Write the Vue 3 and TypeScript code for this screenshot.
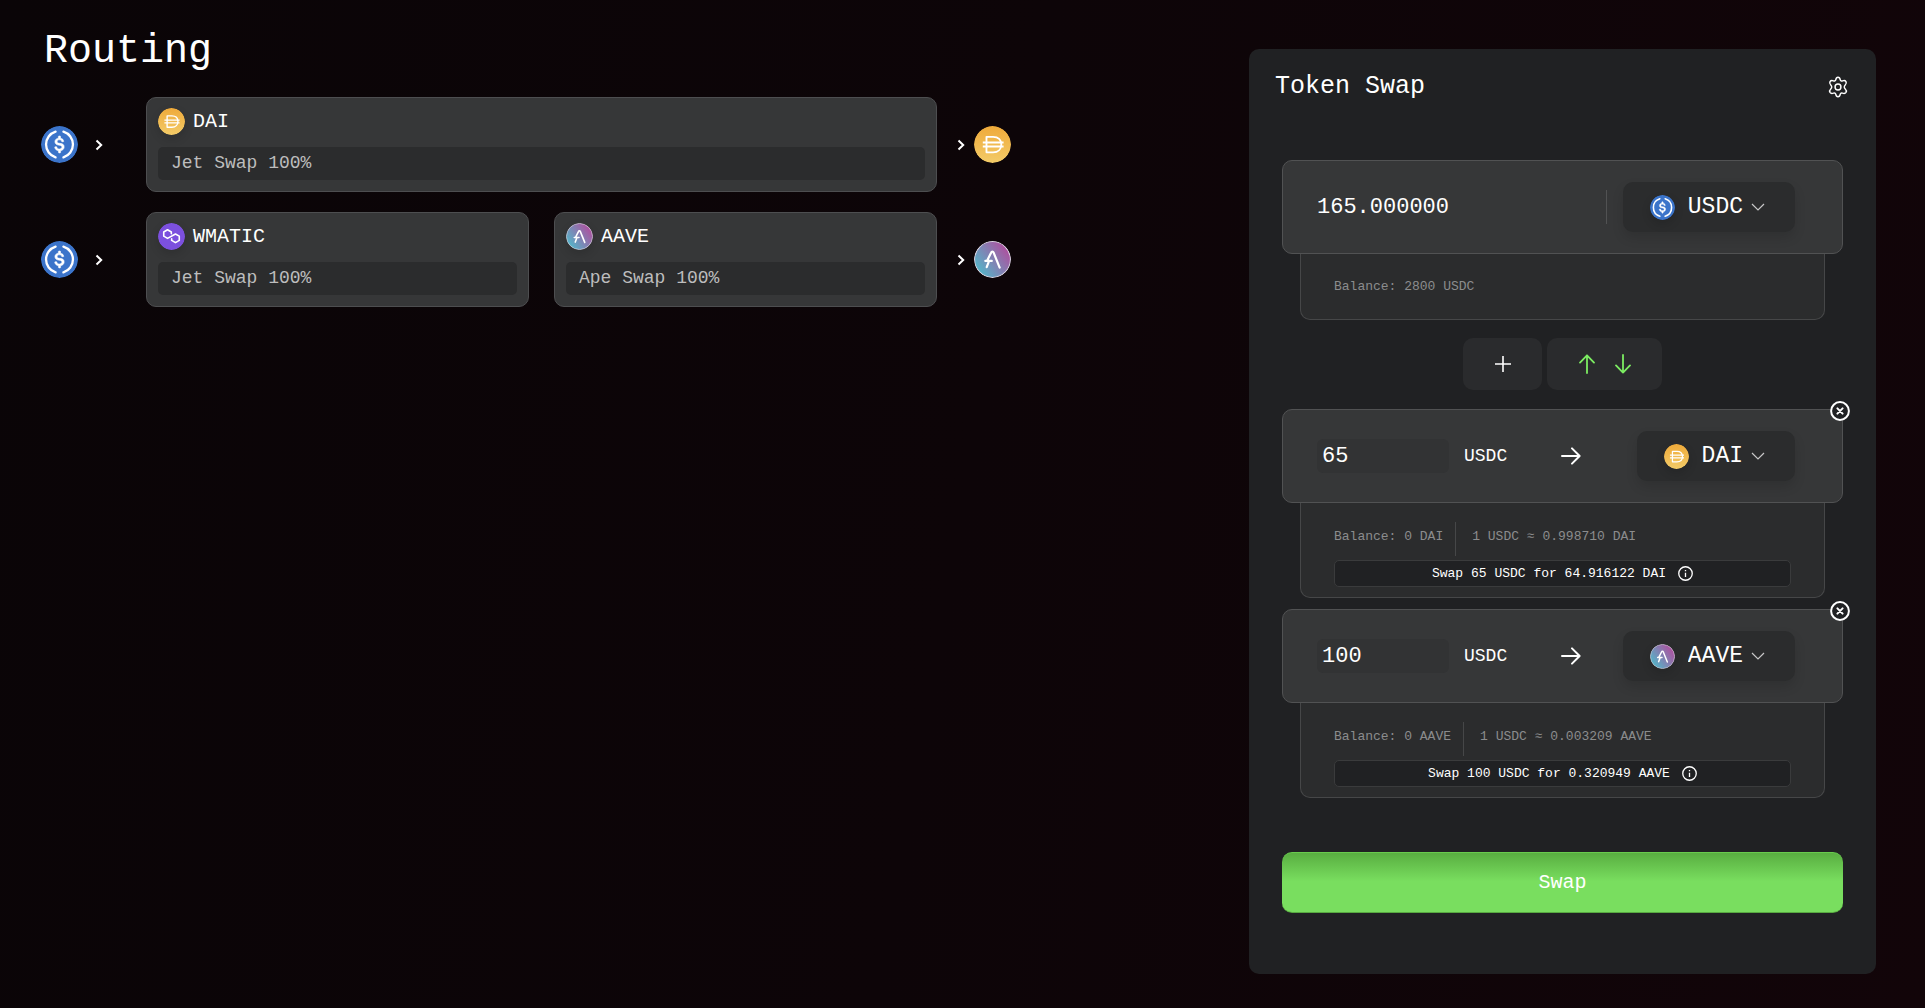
<script setup lang="ts">
import { computed, defineComponent, h, ref } from 'vue'

type Symbol = 'USDC' | 'DAI' | 'AAVE' | 'WMATIC'

interface Hop {
  token: Symbol
  venue: string
}

interface Route {
  from: Symbol
  to: Symbol
  hops: Hop[]
}

interface Target {
  id: number
  amount: string
  token: Symbol
  balance: string
  rate: string
  output: string
}

const DOLLAR =
  'M20.022 18.124c0-2.124-1.28-2.852-3.84-3.156-1.828-.243-2.193-.728-2.193-1.578 0-.85.61-1.396 1.828-1.396 1.097 0 1.707.364 2.011 1.275a.458.458 0 00.427.303h.975a.416.416 0 00.427-.425v-.06a3.04 3.04 0 00-2.743-2.489V9.142c0-.243-.183-.425-.487-.486h-.915c-.243 0-.426.182-.487.486v1.396c-1.829.242-2.986 1.456-2.986 2.974 0 2.002 1.218 2.791 3.778 3.095 1.707.303 2.255.668 2.255 1.639 0 .97-.853 1.638-2.011 1.638-1.585 0-2.133-.667-2.316-1.578-.06-.242-.244-.364-.427-.364h-1.036a.416.416 0 00-.426.425v.06c.243 1.518 1.219 2.61 3.23 2.914v1.457c0 .242.183.425.487.485h.915c.243 0 .426-.182.487-.485V21.34c1.829-.303 3.047-1.578 3.047-3.217z'

const line = { fill: 'none', stroke: '#fff', 'stroke-linecap': 'round', 'stroke-linejoin': 'round' }

const marks: Record<Symbol, () => unknown[]> = {
  USDC: () => [
    h('circle', { cx: 16, cy: 16, r: 16, fill: '#3b74ca' }),
    h('path', { d: DOLLAR, fill: '#fff', stroke: '#fff', 'stroke-width': 0.5 }),
    h('path', { ...line, 'stroke-width': 2, d: 'M12.6 4.9A11.6 11.6 0 0 0 12.6 27.1M19.4 4.9A11.6 11.6 0 0 1 19.4 27.1' }),
  ],
  DAI: () => [
    h('circle', { cx: 16, cy: 16, r: 16, fill: 'url(#fill-dai)' }),
    h('path', {
      ...line,
      'stroke-linecap': 'butt',
      'stroke-width': 1.6,
      d: 'M10.8 9.4H16.5C21 9.4 23.6 12.2 23.6 16S21 22.8 16.5 22.8H10.8ZM7.6 14.3H25.6M7.6 17.7H25.6',
    }),
  ],
  AAVE: () => [
    h('circle', { cx: 16, cy: 16, r: 15.5, fill: 'url(#fill-aave)', stroke: '#d9d3e2', 'stroke-width': 0.9 }),
    h('path', { ...line, 'stroke-width': 1.9, d: 'M22.2 23L16.9 9.9C16.5 8.9 15.3 8.9 14.9 9.9L11.2 17.2M12.8 17.8L11 22.6M9.8 17.2H15.4' }),
  ],
  WMATIC: () => [
    h('circle', { cx: 16, cy: 16, r: 16, fill: '#7c50de' }),
    h('path', {
      ...line,
      'stroke-width': 1.9,
      d: 'M15.8 12.6V10.6L11.3 8L6.8 10.6V15.6L11.3 18.2L20.7 13L25.2 15.6V20.6L20.7 23.2L16.2 20.6V18.6',
    }),
  ],
}

const TokenIcon = defineComponent({
  props: { name: { type: String, required: true } },
  setup(props) {
    return () =>
      h('svg', { viewBox: '0 0 32 32', role: 'img', 'aria-label': props.name }, marks[props.name as Symbol]() as any)
  },
})

const tokens: Symbol[] = ['USDC', 'DAI', 'AAVE', 'WMATIC']

const routes: Route[] = [
  { from: 'USDC', to: 'DAI', hops: [{ token: 'DAI', venue: 'Jet Swap 100%' }] },
  {
    from: 'USDC',
    to: 'AAVE',
    hops: [
      { token: 'WMATIC', venue: 'Jet Swap 100%' },
      { token: 'AAVE', venue: 'Ape Swap 100%' },
    ],
  },
]

const source = ref<Symbol>('USDC')
const targets = ref<Target[]>([
  { id: 1, amount: '65', token: 'DAI', balance: '0', rate: '0.998710', output: '64.916122' },
  { id: 2, amount: '100', token: 'AAVE', balance: '0', rate: '0.003209', output: '0.320949' },
])

const total = computed(() => targets.value.reduce((sum, t) => sum + Number(t.amount), 0).toFixed(6))

function remove(id: number) {
  targets.value = targets.value.filter((t) => t.id !== id)
}
</script>

<template>
  <main class="page">
    <svg class="defs" aria-hidden="true">
      <defs>
        <linearGradient id="fill-dai" x1="0" y1="0" x2="0" y2="1">
          <stop offset="0" stop-color="#efaa3a" />
          <stop offset="1" stop-color="#f3cb68" />
        </linearGradient>
        <linearGradient id="fill-aave" x1="0.1" y1="0.8" x2="0.9" y2="0.2">
          <stop offset="0" stop-color="#55b4c8" />
          <stop offset="1" stop-color="#ad519f" />
        </linearGradient>
      </defs>
    </svg>

    <section class="routing">
      <h1>Routing</h1>
      <div v-for="route in routes" :key="route.to" class="route">
        <TokenIcon class="coin coin-lg" :name="route.from" />
        <svg class="step step-in" viewBox="0 0 8 12" aria-hidden="true"><path d="M1.5 1.5L6.2 6L1.5 10.5" /></svg>
        <div class="hops">
          <article v-for="hop in route.hops" :key="hop.token" class="hop">
            <h2><TokenIcon class="coin coin-md" :name="hop.token" />{{ hop.token }}</h2>
            <p>{{ hop.venue }}</p>
          </article>
        </div>
        <svg class="step" viewBox="0 0 8 12" aria-hidden="true"><path d="M1.5 1.5L6.2 6L1.5 10.5" /></svg>
        <TokenIcon class="coin coin-lg" :name="route.to" />
      </div>
    </section>

    <section class="panel">
      <header class="panel-head">
        <h2>Token Swap</h2>
        <button type="button" class="bare gear" aria-label="Settings">
          <svg viewBox="0 0 24 24" aria-hidden="true">
            <path d="M9.6 3.9 C9.9 2.2 10.6 1.4 12 1.4 C13.4 1.4 14.1 2.2 14.4 3.9 C14.7 5.2 15.8 5.8 17 5.3 C18.7 4.7 19.9 4.9 20.7 6.2 C21.5 7.6 21.1 8.7 19.9 9.8 C18.5 11.1 18.5 12.9 19.9 14.2 C21.1 15.3 21.5 16.4 20.7 17.8 C19.9 19.1 18.7 19.3 17 18.7 C15.8 18.2 14.7 18.8 14.4 20.1 C14.1 21.8 13.4 22.6 12 22.6 C10.6 22.6 9.9 21.8 9.6 20.1 C9.3 18.8 8.2 18.2 7 18.7 C5.3 19.3 4.1 19.1 3.3 17.8 C2.5 16.4 2.9 15.3 4.1 14.2 C5.5 12.9 5.5 11.1 4.1 9.8 C2.9 8.7 2.5 7.6 3.3 6.2 C4.1 4.9 5.3 4.7 7 5.3 C8.2 5.8 9.3 5.2 9.6 3.9 Z" />
            <circle cx="12" cy="12" r="3.2" />
          </svg>
        </button>
      </header>

      <div class="card">
        <input class="amount total" type="text" aria-label="Total amount" :value="total" readonly />
        <span class="rule"></span>
        <label class="picker">
          <TokenIcon class="coin coin-sm" :name="source" />
          <select v-model="source" aria-label="Source token" :style="{ width: source.length + 'ch' }">
            <option v-for="t in tokens" :key="t" :value="t">{{ t }}</option>
          </select>
          <svg class="caret" viewBox="0 0 14 8" aria-hidden="true"><path d="M1 1L7 7L13 1" /></svg>
        </label>
      </div>
      <div class="details details-single">Balance: 2800 {{ source }}</div>

      <div class="tools">
        <button type="button" class="tool" aria-label="Add token">
          <svg class="plus" viewBox="0 0 16 16" aria-hidden="true"><path d="M8 0V16M0 8H16" /></svg>
        </button>
        <button type="button" class="tool tool-flip" aria-label="Flip direction">
          <svg class="flip" viewBox="0 0 16 20" aria-hidden="true"><path d="M8 19V1.4M1 8.6L8 1.4L15 8.6" /></svg>
          <svg class="flip" viewBox="0 0 16 20" aria-hidden="true"><path d="M8 1V18.6M1 11.4L8 18.6L15 11.4" /></svg>
        </button>
      </div>

      <div class="targets">
        <div v-for="target in targets" :key="target.id">
          <div class="card">
            <input v-model="target.amount" class="amount part" type="text" aria-label="Amount" />
            <span class="unit">{{ source }}</span>
            <svg class="arrow" viewBox="0 0 20 18" aria-hidden="true"><path d="M1 9H18.4M11 1.4L18.6 9L11 16.6" /></svg>
            <label class="picker">
              <TokenIcon class="coin coin-sm" :name="target.token" />
              <select v-model="target.token" aria-label="Target token" :style="{ width: target.token.length + 'ch' }">
                <option v-for="t in tokens" :key="t" :value="t">{{ t }}</option>
              </select>
              <svg class="caret" viewBox="0 0 14 8" aria-hidden="true"><path d="M1 1L7 7L13 1" /></svg>
            </label>
            <button type="button" class="bare close" aria-label="Remove" @click="remove(target.id)">
              <svg viewBox="0 0 20 20" aria-hidden="true">
                <circle cx="10" cy="10" r="8.9" />
                <path d="M7.4 7.4L12.6 12.6M12.6 7.4L7.4 12.6" />
              </svg>
            </button>
          </div>
          <div class="details">
            <div class="facts">
              <span>Balance: {{ target.balance }} {{ target.token }}</span>
              <span class="rule"></span>
              <span>1 {{ source }} ≈ {{ target.rate }} {{ target.token }}</span>
            </div>
            <div class="quote">
              Swap {{ target.amount }} {{ source }} for {{ target.output }} {{ target.token }}
              <svg class="info" viewBox="0 0 16 16" aria-hidden="true">
                <circle cx="8" cy="8" r="7.2" />
                <path d="M8 7.2V11.6M8 4.2V5.6" />
              </svg>
            </div>
          </div>
        </div>
      </div>

      <button type="button" class="submit">Swap</button>
    </section>
  </main>
</template>

<style>
body {
  background: #0d0508;
}
</style>

<style scoped>
.page {
  box-sizing: border-box;
  min-height: 100vh;
  display: grid;
  grid-template-columns: 970fr 627fr;
  column-gap: 238px;
  align-items: start;
  padding: 0 49px 34px 41px;
  background: linear-gradient(100deg, #0a0507 0%, #0d0508 50%, #120509 100%);
  color: #fff;
  font-family: 'Liberation Mono', monospace;
}

.page * {
  box-sizing: border-box;
}

.defs {
  position: absolute;
  width: 0;
  height: 0;
}

svg {
  display: block;
  flex: none;
}

h1,
h2,
p {
  margin: 0;
  font-weight: 400;
}

button,
input,
select {
  font: inherit;
  color: inherit;
  border: 0;
  margin: 0;
  padding: 0;
}

.bare {
  background: none;
}

.coin {
  border-radius: 50%;
}

.coin-lg {
  width: 37px;
  height: 37px;
}

.coin-md {
  width: 27px;
  height: 27px;
}

.coin-sm {
  width: 25px;
  height: 25px;
}

.coin-md,
.coin-sm {
  box-shadow: 0 4px 10px rgba(0, 0, 0, 0.14);
}

/* Routing */

.routing {
  padding-top: 28px;
}

h1 {
  margin: 0 0 21px 3px;
  font-size: 40px;
  line-height: 48px;
}

.route {
  display: flex;
  align-items: center;
}

.route + .route {
  margin-top: 20px;
}

.step {
  width: 8px;
  height: 12px;
  margin: 0 9px 0 20px;
  fill: none;
  stroke: #fff;
  stroke-width: 2;
}

.step-in {
  margin: 0 43px 0 17px;
}

.hops {
  flex: 1;
  display: flex;
  gap: 25px;
}

.hop {
  flex: 1;
  padding: 10px 11px 11px;
  border: 1px solid #4d4e50;
  border-radius: 10px;
  background: #363738;
}

.hop h2 {
  display: flex;
  align-items: center;
  gap: 8px;
  height: 27px;
  margin-bottom: 12px;
  font-size: 20px;
}

.hop p {
  padding-left: 13px;
  border-radius: 5px;
  background: #2b2c2d;
  color: #bdbdbd;
  font-size: 18px;
  line-height: 33px;
}

/* Swap panel */

.panel {
  margin-top: 49px;
  padding: 23px 33px 61px;
  border-radius: 10px;
  background: #202123;
}

.panel-head {
  display: flex;
  align-items: center;
  justify-content: space-between;
  margin: 0 -6px 58px -7px;
}

.panel-head h2 {
  font-size: 25px;
  line-height: 30px;
}

.gear svg {
  width: 22px;
  height: 22px;
  fill: none;
  stroke: #fff;
  stroke-width: 1.6;
}

.card {
  position: relative;
  display: flex;
  align-items: center;
  height: 94px;
  padding: 0 47px 0 34px;
  border: 1px solid #515253;
  border-radius: 10px;
  background: #363738;
}

.amount {
  min-width: 0;
  height: 34px;
  border-radius: 6px;
  background: #323334;
  font-size: 22px;
}

.total {
  flex: 1;
  background: none;
}

.part {
  width: 132px;
  padding-left: 5px;
}

.unit {
  margin: 0 54px 0 15px;
  font-size: 18px;
}

.arrow {
  width: 20px;
  height: 18px;
  fill: none;
  stroke: #fff;
  stroke-width: 2;
  stroke-linecap: round;
  stroke-linejoin: round;
}

.rule {
  width: 1px;
  height: 34px;
  background: #515253;
}

.picker {
  display: flex;
  align-items: center;
  height: 50px;
  margin-left: auto;
  padding: 0 30px 0 27px;
  border-radius: 10px;
  background: #2b2c2d;
  box-shadow: 0 6px 12px rgba(0, 0, 0, 0.12);
  font-size: 23px;
}

.total + .rule {
  margin-right: 16px;
}

.picker select {
  box-sizing: content-box;
  margin-left: 13px;
  appearance: none;
  background: none;
}

.caret {
  width: 14px;
  height: 8px;
  margin-left: 8px;
  fill: none;
  stroke: #c8c8c8;
  stroke-width: 1.2;
}

.close {
  position: absolute;
  top: -9px;
  right: -8px;
}

.close svg {
  width: 20px;
  height: 20px;
  fill: #202123;
  stroke: #fff;
  stroke-width: 2;
  stroke-linecap: round;
}

.details {
  margin: 0 18px;
  padding: 19px 33px 10px;
  border: 1px solid #464748;
  border-top: 0;
  border-radius: 0 0 10px 10px;
  background: #2b2c2d;
  color: #8b8c8d;
  font-size: 13px;
}

.details-single {
  padding: 0 33px;
  line-height: 65px;
}

.facts {
  display: flex;
  margin-bottom: 4px;
  line-height: 30px;
}

.facts .rule {
  margin: 0 16px 0 12px;
  background: #464748;
}

.quote {
  display: flex;
  align-items: center;
  justify-content: center;
  gap: 12px;
  height: 27px;
  border: 1px solid #3a3b3c;
  border-radius: 5px;
  background: #202123;
  color: #fff;
}

.info {
  width: 15px;
  height: 15px;
  fill: none;
  stroke: #fff;
  stroke-width: 1.4;
}

.tools {
  display: flex;
  justify-content: center;
  gap: 5px;
  margin: 18px 0 19px;
}

.tool {
  display: flex;
  align-items: center;
  justify-content: center;
  gap: 20px;
  width: 79px;
  height: 52px;
  border-radius: 10px;
  background: #2a2b2d;
}

.tool-flip {
  width: 115px;
}

.plus {
  width: 16px;
  height: 16px;
  stroke: #fff;
  stroke-width: 1.6;
}

.flip {
  width: 16px;
  height: 20px;
  fill: none;
  stroke: #7ced62;
  stroke-width: 1.8;
  stroke-linecap: round;
  stroke-linejoin: round;
}

.targets {
  display: grid;
  gap: 11px;
}

.submit {
  display: block;
  width: 100%;
  height: 61px;
  margin-top: 54px;
  border-top: 1px solid #69cb4e;
  border-bottom: 1px solid #58a941;
  border-radius: 10px;
  background: linear-gradient(#59ae41, #79de5f 48%);
  font-size: 20px;
}
</style>
